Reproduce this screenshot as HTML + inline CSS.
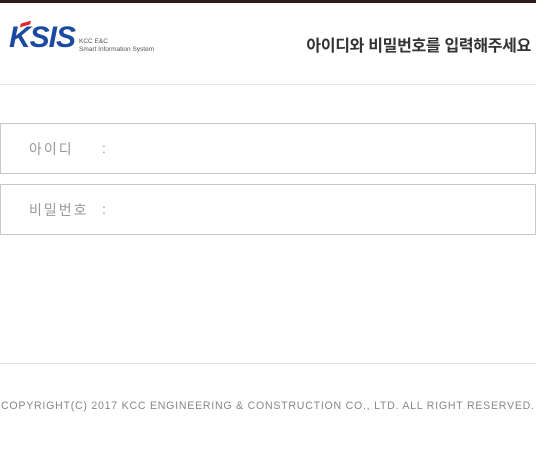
<!DOCTYPE html>
<html><head><meta charset="utf-8"><style>
body{margin:0;width:536px;height:450px;background:#fff;position:relative;overflow:hidden;font-family:"Liberation Sans","Noto Sans CJK KR",sans-serif}
.top{position:absolute;left:0;top:0;width:536px;height:3px;background:#2b1c1c}
.logo{position:absolute;left:9px;top:21px;font:italic bold 30px "Liberation Sans",sans-serif;color:#1c4aa0;letter-spacing:-1px;line-height:34px}
.logo .k{position:relative}
.logo .k:after{content:"";position:absolute;left:12px;top:1px;width:9px;height:4px;background:#e3262b;transform:skewX(-30deg) rotate(-20deg)}
.sub{position:absolute;left:79px;top:38px;font-size:6.5px;line-height:8px;color:#555}
.title{position:absolute;right:5px;top:32px;font-size:16px;font-weight:bold;color:#333;letter-spacing:-0.3px}
.hl{position:absolute;left:0;top:84px;width:536px;height:1px;background:#e8e8e8}
.box{position:absolute;left:0;width:534px;height:49px;border:1px solid #c8c8c8}
.lab{position:absolute;left:28px;top:15px;font-size:14px;color:#999;letter-spacing:2px}
.col{position:absolute;left:101px;top:16px;font-size:14px;color:#999}
.fl{position:absolute;left:0;top:363px;width:536px;height:1px;background:#ddd}
.copy{position:absolute;left:1px;top:400px;font-size:10.6px;color:#888;white-space:nowrap;letter-spacing:0.75px}
</style></head><body>
<div class="top"></div>
<div class="logo"><span class="k">K</span>SIS</div>
<div class="sub">KCC E&amp;C<br>Smart Information System</div>
<div class="title">아이디와 비밀번호를 입력해주세요</div>
<div class="hl"></div>
<div class="box" style="top:123px"><span class="lab">아이디</span><span class="col">:</span></div>
<div class="box" style="top:184px"><span class="lab">비밀번호</span><span class="col">:</span></div>
<div class="fl"></div>
<div class="copy">COPYRIGHT(C) 2017 KCC ENGINEERING &amp; CONSTRUCTION CO., LTD. ALL RIGHT RESERVED.</div>
</body></html>
